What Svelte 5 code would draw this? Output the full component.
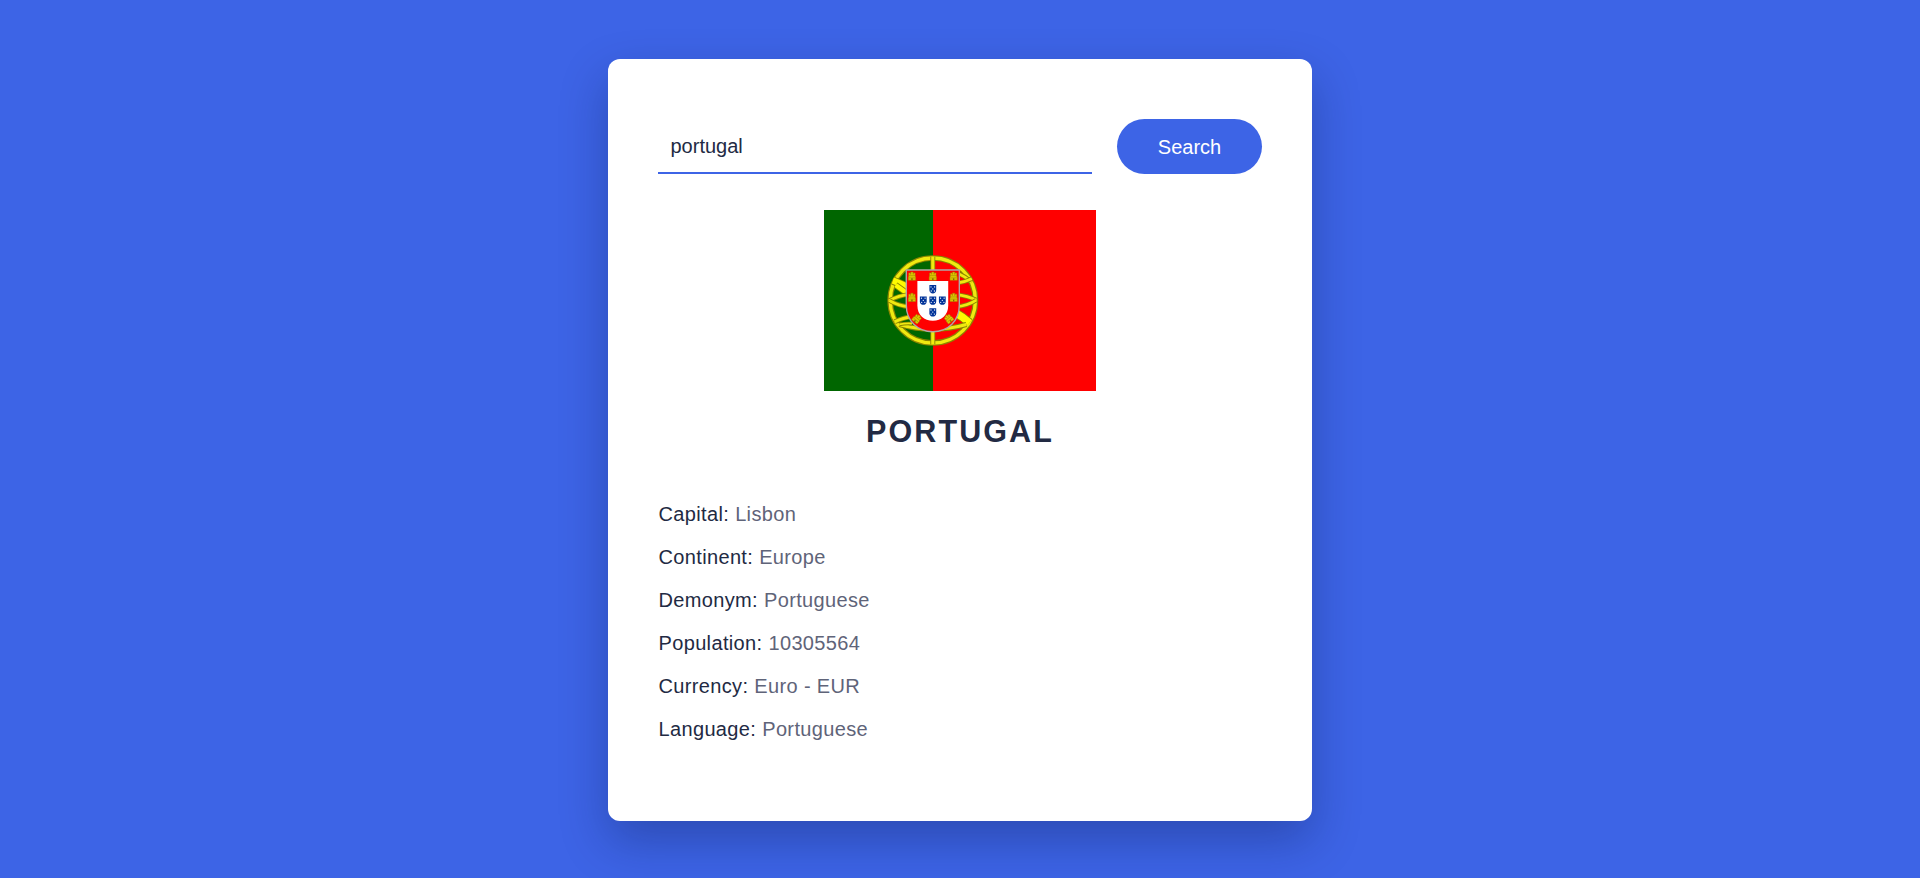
<script>
  let query = $state('portugal');

  const country = {
    name: 'Portugal',
    facts: [
      ['Capital', 'Lisbon'],
      ['Continent', 'Europe'],
      ['Demonym', 'Portuguese'],
      ['Population', '10305564'],
      ['Currency', 'Euro - EUR'],
      ['Language', 'Portuguese']
    ]
  };

  // Armillary sphere bands: path and thickness, around the emblem centre
  const bands = [
    ['M-88 -44 Q-66 -36 -48 -24', 16],
    ['M-82 -34 Q-64 -22 -48 -8', 12],
    ['M48 26 Q66 36 81 49', 18],
    ['M-96 0 Q-76 -11 -50 -14', 8],
    ['M-96 0 Q-76 12 -50 14', 8],
    ['M96 -1 Q78 -10 50 -13', 8],
    ['M96 -1 Q78 11 50 14', 8],
    ['M50 -62 Q72 -54 85 -40', 8],
    ['M50 -38 Q70 -40 86 -48', 8],
    ['M-84 47 Q-64 38 -48 36', 9],
    ['M-74 53 Q0 74 74 53', 9],
    ['M-74 53 Q-60 50 -46 51', 6],
    ['M0 -97 V97', 9]
  ];

  const castles = [
    [-46, -54, 0], [0, -54, 0], [46, -54, 0],
    [-46, -7, 0], [46, -7, 0],
    [-35, 40, 40], [35, 40, -40]
  ];

  const escutcheons = [[0, -25], [-21, 0], [0, 0], [21, 0], [0, 26]];
  const bezants = [[-4, -5], [4, -5], [0, -0.5], [-3.5, 4], [3.5, 4]];
</script>

<main>
  <section class="card">
    <form class="search" onsubmit={(e) => e.preventDefault()}>
      <input type="text" bind:value={query} spellcheck="false" aria-label="Country" />
      <button type="submit">Search</button>
    </form>

    <svg class="flag" viewBox="0 0 600 400" preserveAspectRatio="none" aria-hidden="true">
      <rect width="600" height="400" fill="#f00" />
      <rect width="240.5" height="400" fill="#060" />
      <g transform="translate(240 200)" fill="none">
        <circle r="94" stroke="#8a8400" stroke-width="12.5" />
        <circle r="94" stroke="#f0ea10" stroke-width="7.5" />
        {#each bands as [d, w]}
          <path {d} stroke="#8a8400" stroke-width={w + 2} />
          <path {d} stroke={w > 10 ? '#fffb00' : '#f0ea10'} stroke-width={w - 2} />
        {/each}
        <path d="M-58.500 -67.500H58.500V10C58.500 45 34 69 0 69S-58.500 45 -58.500 10Z" fill="#f00" stroke="#b0a8a8" stroke-width="3" />
        <path d="M-34 -43H34V11C34 32 19 45 0 45S-34 32 -34 11Z" fill="#fff" />
        {#each castles as [x, y, a]}
          <g transform="translate({x} {y}) rotate({a})">
            <path d="M-8 9V1H-7V-7H-3V-4H-2.500V-9H2.500V-4H3V-7H7V1H8V9Z" fill="#dcc800" stroke="#a58600" stroke-width="1" />
            <path d="M-7 -1H7M-7 4H7" stroke="#a18a00" stroke-width="1.300" />
            <path d="M-1.500 9V5H1.500V9Z" fill="#7d6a00" />
          </g>
        {/each}
        {#each escutcheons as [x, y]}
          <g transform="translate({x} {y})">
            <path d="M-7.500 -9H7.500V2C7.500 7 4 9.500 0 9.500S-7.500 7 -7.500 2Z" fill="#039" />
            {#each bezants as [bx, by]}
              <circle cx={bx} cy={by} r="1.400" fill="#fff" />
            {/each}
          </g>
        {/each}
      </g>
    </svg>

    <h1>{country.name}</h1>

    <dl>
      {#each country.facts as [label, value]}
        <div class="fact">
          <dt>{label}:</dt>
          <dd>{value}</dd>
        </div>
      {/each}
    </dl>
  </section>
</main>

<style>
  :global(body) {
    background: #3d64e6;
    overflow: hidden;
  }

  main {
    box-sizing: border-box;
    height: 878px;
    padding-top: 59px;
    font-family: 'Liberation Sans', Arial, sans-serif;
    color: #222a43;
  }

  .card {
    box-sizing: border-box;
    display: flex;
    flex-direction: column;
    width: 704px;
    height: 762px;
    margin: 0 auto;
    padding: 60px 50px;
    background: #fff;
    border-radius: 12px;
    box-shadow: 0 20px 48px rgba(8, 21, 65, 0.3);
  }

  .search {
    display: grid;
    grid-template-columns: 1fr 145px;
    gap: 25px;
    height: 55px;
  }

  input,
  button {
    box-sizing: border-box;
    min-width: 0;
    margin: 0;
    border: 0;
    outline: 0;
    font: 20px 'Liberation Sans', Arial, sans-serif;
  }

  input {
    padding: 2px 12px 0 12.5px;
    border-bottom: 2px solid #3d64e6;
    background: transparent;
    color: #222a43;
  }

  button {
    padding: 1px 0 0;
    border-radius: 48px;
    background: #3d64e6;
    color: #fff;
  }

  .flag {
    display: block;
    width: 272px;
    height: 181px;
    margin: 36px auto 0;
  }

  h1 {
    margin: 22px 0 0;
    font-size: 30.5px;
    line-height: 36px;
    font-weight: 600;
    letter-spacing: 2.1px;
    text-align: center;
    text-transform: uppercase;
  }

  dl {
    display: flex;
    flex-direction: column;
    gap: 20px;
    margin: 54px 0 0;
    padding-left: 0.5px;
    font-size: 20px;
    line-height: 23px;
    letter-spacing: 0.35px;
  }

  .fact {
    display: flex;
    gap: 6px;
  }

  dd {
    margin: 0;
    color: #5f6479;
  }
</style>
